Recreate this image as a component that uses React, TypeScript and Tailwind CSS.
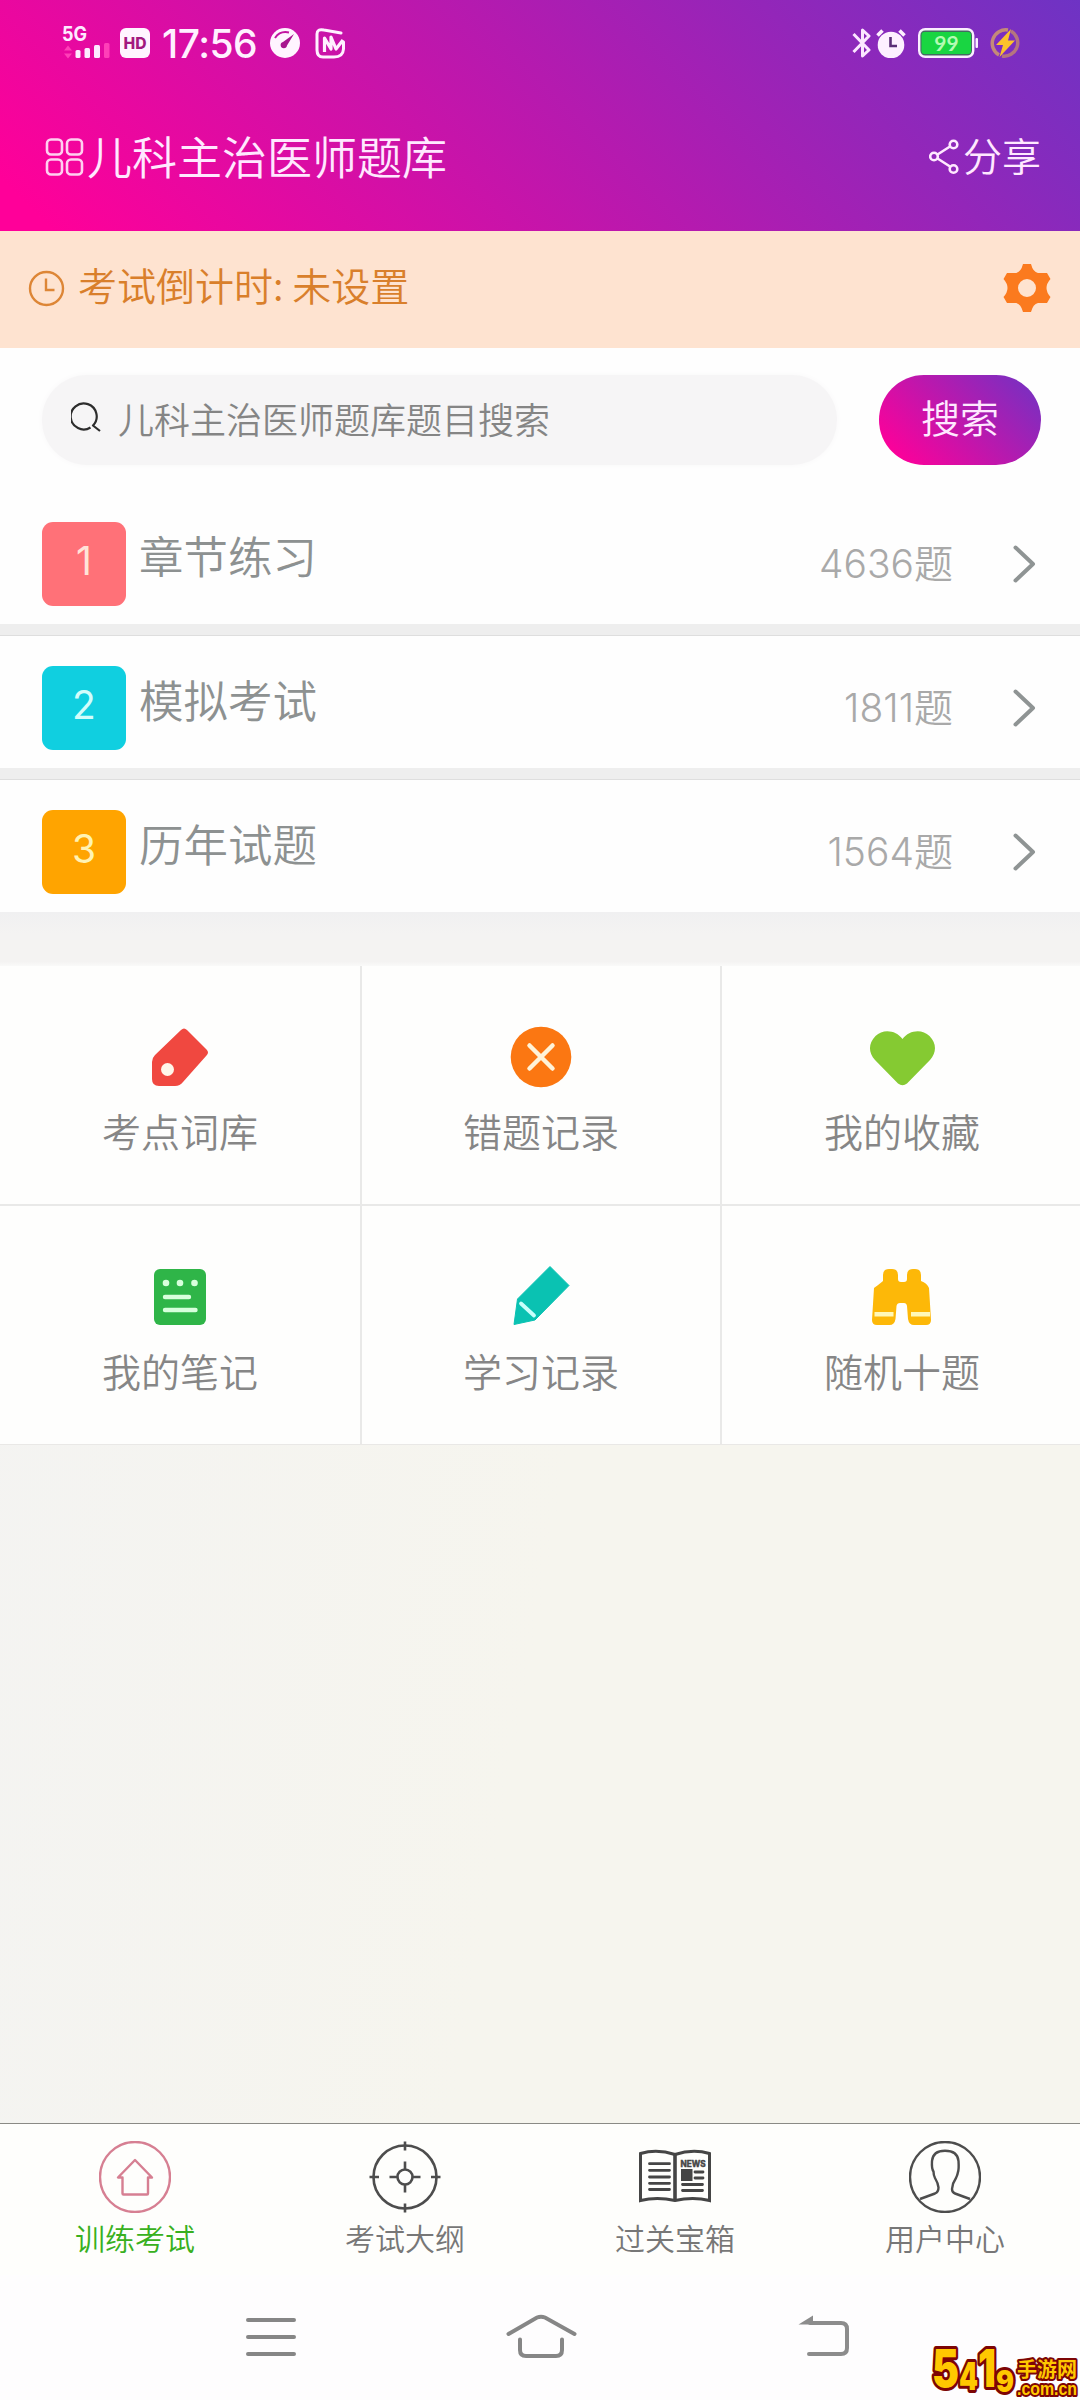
import type { ReactNode } from 'react';

type Section = {
  no: string;
  title: string;
  count: string;
  color: string;
};

type Tool = {
  label: string;
  icon: ReactNode;
};

type Tab = {
  label: string;
  active?: boolean;
  icon: ReactNode;
};

const sections: Section[] = [
  { no: '1', title: '章节练习', count: '4636', color: 'bg-[#ff7178] text-[#ffe3d8]' },
  { no: '2', title: '模拟考试', count: '1811', color: 'bg-[#10cfe0] text-[#d2fdfb]' },
  { no: '3', title: '历年试题', count: '1564', color: 'bg-[#ffa400] text-[#fff3b4]' },
];

const tools: Tool[] = [
  {
    label: '考点词库',
    icon: (
      <>
        <path
          d="M37 9q3-3 6 0L62.500 28.500q3 3 0 6L39 61q-3 4-8 4H15q-7 0-7-7V41q0-4 3-7z"
          fill="#f04840"
        />
        <circle cx="23.500" cy="48.500" r="6.500" fill="#fff6ea" />
      </>
    ),
  },
  {
    label: '错题记录',
    icon: (
      <>
        <circle cx="36" cy="36" r="30.300" fill="#fb7712" />
        <path d="M24.500 24.500l23 23M47.500 24.500l-23 23" stroke="#fff3d8" strokeWidth="4.500" strokeLinecap="round" />
      </>
    ),
  },
  {
    label: '我的收藏',
    icon: (
      <path
        d="M36.500 18C30 9 17 7.500 9.500 15C2 22.500 2.500 32 9 39L32 62.500Q36.500 66 41 62.500L64 39C70.500 32 71 22.500 63.500 15C56 7.500 43 9 36.500 18Z"
        fill="#85ca32"
      />
    ),
  },
  {
    label: '我的笔记',
    icon: (
      <>
        <rect x="10" y="8" width="52" height="56" rx="6" fill="#2fb548" />
        <g fill="#d8ffdc">
          <circle cx="22" cy="22" r="3.300" />
          <circle cx="36" cy="22" r="3.300" />
          <circle cx="50.500" cy="22" r="3.300" />
        </g>
        <path d="M21 36h24M21 49h30.500" stroke="#d8ffdc" strokeWidth="4.400" strokeLinecap="round" />
      </>
    ),
  },
  {
    label: '学习记录',
    icon: (
      <>
        <path d="M9 63.500L12.500 38L45 5.500L64 24.500L30 59Z" fill="#0ac2b2" stroke="#0ac2b2" strokeLinejoin="round" />
        <path d="M16 42.500L29 54.500" stroke="#c8fffb" strokeWidth="3.800" strokeLinecap="round" />
      </>
    ),
  },
  {
    label: '随机十题',
    icon: (
      <>
        <path
          d="M17 14q0-6 6-6h3q6 0 6 6v4q0 3 3 3h3q3 0 3-3v-4q0-6 6-6h2q6 0 6 6v6q6 2 8 7l2 32q0 5-5 5H48q-5 0-6-6l-1-13q-.500-3-3-3h-4q-3 0-3.500 3l-1 13q-1 6-6 6H11q-5 0-5-5l2-32q3-2 9-7z"
          fill="#fdb808"
        />
        <path d="M8.500 53.300h19M45 53.300h19" stroke="#fff8b8" strokeWidth="4.400" />
      </>
    ),
  },
];

const tabs: Tab[] = [
  {
    label: '训练考试',
    active: true,
    icon: (
      <g stroke="#d67f92" strokeWidth="2.400">
        <circle cx="36" cy="36" r="35" />
        <path d="M36 19L19 36.500H23.500V52.500Q23.500 53.500 24.500 53.500H48Q49 53.500 49 52.500V36.500H53Z" strokeLinejoin="round" />
      </g>
    ),
  },
  {
    label: '考试大纲',
    icon: (
      <g stroke="#4d4d4d" strokeWidth="2.600">
        <circle cx="36" cy="36" r="31.500" />
        <circle cx="36" cy="36" r="7.500" />
        <path d="M36 .500v9M36 62.500v9M.500 36h9.500M62 36h9.500M36 20.500v8M36 43.500v8M20.500 36h8M43.500 36h8" />
      </g>
    ),
  },
  {
    label: '过关宝箱',
    icon: (
      <g stroke="#454545">
        <path
          d="M36 13.500Q18 7.500 1.500 12.500V59.500Q18 55.500 36 59.500Q54 55.500 70.500 59.500V12.500Q54 7.500 36 13.500Z"
          strokeWidth="3"
        />
        <path d="M36 13v47" strokeWidth="3.600" />
        <path
          d="M10.500 22.700h20M10.500 29.300h20M10.500 36h20M10.500 42.300h20M10.500 48.500h20M56 31h8M56 37h8M43.500 43.500h20M43.500 49.500h20"
          strokeWidth="2.800"
          strokeLinecap="round"
        />
        <rect x="42" y="28" width="11.500" height="12" fill="#454545" stroke="none" />
        <text
          x="41.500"
          y="25.500"
          fontSize="8.600"
          fontWeight="700"
          textLength="25"
          lengthAdjust="spacingAndGlyphs"
          fill="#454545"
          strokeWidth=".500"
          fontFamily="Inter, sans-serif"
        >
          NEWS
        </text>
      </g>
    ),
  },
  {
    label: '用户中心',
    icon: (
      <g stroke="#4d4d4d" strokeWidth="2.400">
        <circle cx="36" cy="36" r="35" />
        <path
          d="M11 58L26 52.500Q29.500 51 29.500 46.500Q29 42 26 37Q24.500 34 24.500 30.500Q22.500 28 23 20Q24 9.800 36 9.800Q48.500 9.800 49.500 20Q50 28 49 31Q48.500 34 47 37Q43.500 42 43 48Q43 51.500 46 52.500L61 58"
          strokeLinejoin="round"
        />
      </g>
    ),
  },
];

function StatusBar() {
  return (
    <div className="flex h-[86px] items-center justify-between pr-[60px] pl-[62px]">
      <div className="flex items-center">
        <svg className="overflow-visible" width="50" height="36" viewBox="0 0 50 36" fill="#fdeaff">
          <text x="0" y="16" fontSize="20" fontWeight="700" textLength="25" lengthAdjust="spacingAndGlyphs" fontFamily="Inter, sans-serif">
            5G
          </text>
          <path d="M2 25.500l4-5 4 5zM2 28.500l4 5 4-5z" fill="#ff3fb8" />
          <rect x="13.500" y="25" width="5" height="8" rx="1.500" />
          <rect x="22.500" y="23" width="5.500" height="10" rx="1.500" />
          <rect x="32" y="20" width="6" height="13" rx="1.500" />
          <rect x="42" y="18" width="5.500" height="15" rx="1.500" fill="#ff3fb8" />
        </svg>
        <svg className="ml-2" width="30" height="30" viewBox="0 0 30 30">
          <rect width="30" height="30" rx="6" fill="#fff4ff" />
          <text
            x="3.500"
            y="21"
            fontSize="16"
            fontWeight="800"
            textLength="23"
            lengthAdjust="spacingAndGlyphs"
            fill="#a3197f"
            fontFamily="Inter, sans-serif"
          >
            HD
          </text>
        </svg>
        <span className="ml-[12px] w-[96px] font-['Inter'] text-[39px] leading-none font-medium tracking-[-.500px] whitespace-nowrap text-[#fff0ff]">
          17:56
        </span>
        <svg className="ml-[12px]" width="30" height="30" viewBox="0 0 30 30">
          <circle cx="15" cy="15" r="15" fill="#fff4ff" />
          <path d="M5 10Q10 2.500 19 4.500" fill="none" stroke="#c213a0" strokeWidth="2" />
          <path d="M24 6L13 14a3.200 3.200 0 1 0 4 3.500z" fill="#a8168f" />
        </svg>
        <svg className="ml-[15px]" width="31" height="31" viewBox="0 0 31 31" fill="none" stroke="#fff0ff">
          <path
            d="M26 5L9 2Q2 .500 2 6V22Q2 29 8 29H19Q28 29 28.500 21V14"
            strokeWidth="3"
            strokeLinecap="round"
            strokeLinejoin="round"
          />
          <path d="M9.500 24V10L16 21V9L21 21L28 12" strokeWidth="3.200" strokeLinejoin="round" />
        </svg>
      </div>

      <div className="flex items-center">
        <svg width="20" height="30" viewBox="0 0 20 30" fill="none" stroke="#fbe6ff" strokeWidth="3">
          <path d="M1.500 6L17 22L10.500 28V2L17 8L1.500 24" strokeLinejoin="round" />
        </svg>
        <svg className="ml-1" width="30" height="30" viewBox="0 0 30 30">
          <circle cx="15" cy="17" r="13.300" fill="#fdf0ff" />
          <path d="M1.500 7.500L6.500 2.500M28.500 7.500L23.500 2.500" stroke="#fdf0ff" strokeWidth="3.600" />
          <path d="M14.500 9v9h6.500" fill="none" stroke="#5a2f77" strokeWidth="2.600" />
        </svg>
        <svg className="ml-3" width="60" height="30" viewBox="0 0 60 30">
          <rect x="1.200" y="1.200" width="54" height="27.600" rx="6" fill="#446a62" stroke="#fbeeff" strokeWidth="2.400" />
          <rect x="3.500" y="4" width="49.500" height="22" rx="3" fill="#19d542" />
          <rect x="57.500" y="10" width="2.500" height="10" rx="1" fill="#fbeeff" />
          <text
            x="28.500"
            y="22.500"
            fontSize="21"
            fontWeight="700"
            textAnchor="middle"
            fill="#b4fbb3"
            fontFamily="Lato, sans-serif"
          >
            99
          </text>
        </svg>
        <svg className="ml-3" width="30" height="30" viewBox="0 0 30 30">
          <path d="M9 27A13.500 13.500 0 0 1 18 2" fill="none" stroke="#c48a78" strokeWidth="3.500" />
          <path d="M21 3A13.500 13.500 0 0 1 12 28" fill="none" stroke="#b5757f" strokeWidth="3.500" />
          <path d="M21 1L6 17h7L9.500 29L25 12.500h-7z" fill="#fbc22b" />
        </svg>
      </div>
    </div>
  );
}

function Header() {
  return (
    <header className="h-[231px] bg-[linear-gradient(45deg,#ff0099_4%,#6e33c4)]">
      <StatusBar />
      <div className="flex h-[142px] items-center justify-between pr-[39px] pl-[45px] text-[#ffe8ff]">
        <div className="flex items-center text-[45px] leading-none">
          <svg width="39" height="39" viewBox="0 0 39 39" fill="none" stroke="#ffd0f0" strokeWidth="2.600">
            <rect x="2" y="1.500" width="15" height="15" rx="4" />
            <rect x="22" y="1.500" width="15" height="15" rx="4" />
            <rect x="2" y="21.500" width="15" height="15" rx="4" />
            <rect x="22" y="21.500" width="15" height="15" rx="4" />
          </svg>
          <h1 className="ml-[3px] pb-[3px]">儿科主治医师题库</h1>
        </div>
        <div className="flex items-center pb-[1px] text-[39px] leading-none">
          <svg width="30" height="36" viewBox="0 0 30 36" fill="none" stroke="#ffe8ff" strokeWidth="2.600">
            <circle cx="5" cy="17.500" r="3.800" />
            <circle cx="24.500" cy="5.500" r="3.800" />
            <circle cx="24.500" cy="30" r="3.800" />
            <path d="M8.500 15.500L21 7.500M8.500 19.500L21 27.500" />
          </svg>
          <span className="ml-[4px] pb-[5px]">分享</span>
        </div>
      </div>
    </header>
  );
}

function Countdown() {
  return (
    <div className="flex h-[117px] items-center justify-between bg-[#fee3d0] pr-[28px] pb-[3px] pl-[28px]">
      <div className="flex items-center text-[39px] leading-none text-[#d97f2b]">
        <svg width="37" height="37" viewBox="0 0 37 37" fill="none" stroke="#dd8636" strokeWidth="2.400">
          <circle cx="18.500" cy="18.500" r="16.500" />
          <path d="M18 8.500v11.500h8.500" />
        </svg>
        <span className="ml-[13px] pb-[7px] whitespace-pre">考试倒计时: 未设置</span>
      </div>
      <svg width="50" height="50" viewBox="-25 -25 50 50" fill="#fb7a1e">
        <path
          fillRule="evenodd"
          d="M-4-24H4Q6-16 11-15H20L23.500-9Q15.500 0 23.500 9L20 15H11Q6 16 4 24H-4Q-6 16-11 15H-20L-23.500 9Q-15.500 0-23.500-9L-20-15H-11Q-6-16-4-24ZM0-9A9 9 0 1 0 0 9A9 9 0 1 0 0-9Z"
        />
      </svg>
    </div>
  );
}

function SearchBar() {
  return (
    <div className="flex h-[144px] items-start justify-between bg-[#fefefe] pt-[27px] pr-[39px] pl-[42px]">
      <div className="flex h-[90px] w-[795px] items-center rounded-full bg-[#f6f5f6] pl-[29px] shadow-[0_0_6px_#f9f8f9]">
        <svg className="mb-[7px]" width="31" height="31" viewBox="0 0 31 31" fill="none" stroke="#2d2d2d" strokeWidth="2.200">
          <path d="M19.500 26.500A13 13 0 1 1 22 24.500L29 30" strokeLinejoin="round" />
        </svg>
        <span className="ml-[16px] pb-[5px] text-[36px] leading-none text-[#858585]">儿科主治医师题库题目搜索</span>
      </div>
      <button className="h-[90px] w-[162px] rounded-full bg-[linear-gradient(45deg,#ff0099_8%,#6e33c4)] pb-[7px] text-[39px] leading-none text-[#ffe8ff]">
        搜索
      </button>
    </div>
  );
}

function SectionRow({ section }: { section: Section }) {
  return (
    <div className="flex h-[132px] items-center bg-[#fefefe] pt-[12px] pl-[42px] pr-[44px]">
      <div
        className={`flex size-[84px] items-center justify-center rounded-[11px] pb-[8px] font-['Inter'] text-[39px] leading-none font-normal ${section.color}`}
      >
        {section.no}
      </div>
      <div className="ml-[13px] pb-[18px] text-[44.500px] leading-none text-[#8d9191]">{section.title}</div>
      <div className="ml-auto flex items-center pb-[3px] text-[39px] leading-none text-[#a9a9a9]">
        <span className="pt-[2px] font-['Inter'] text-[39px]">{section.count}</span>
        <span className="pb-[3px]">题</span>
      </div>
      <svg className="ml-[60px]" width="23" height="38" viewBox="0 0 23 38" fill="none" stroke="#8f9494" strokeWidth="4">
        <path d="M2.500 2.500L20 19L2.500 35.500" strokeLinecap="round" strokeLinejoin="round" />
      </svg>
    </div>
  );
}

function ToolGrid() {
  return (
    <div className="grid grid-cols-[362px_360px_358px] border-b border-[#e9e8e6] bg-[#fefefd]">
      {tools.map((t, i) => (
        <div
          key={t.label}
          className={`flex flex-col items-center border-[#e9e9e8] pt-[55px] ${
            i % 3 < 2 ? 'border-r-2' : 'pl-[2px]'
          } ${i < 3 ? 'h-[240px] border-b-2' : 'h-[238px]'}`}
        >
          <svg width="72" height="72" viewBox="0 0 72 72" fill="none">
            {t.icon}
          </svg>
          <span className="mt-[18px] text-[39px] leading-none text-[#868686]">{t.label}</span>
        </div>
      ))}
    </div>
  );
}

function TabBar() {
  return (
    <nav className="grid h-[152px] grid-cols-4 border-t border-[#8a8a85] bg-[#fefefc]">
      {tabs.map((t) => (
        <div key={t.label} className="flex flex-col items-center pt-[17px]">
          <svg width="72" height="72" viewBox="0 0 72 72" fill="none">
            {t.icon}
          </svg>
          <span className={`mt-[9px] text-[30px] leading-none ${t.active ? 'text-[#38b020]' : 'text-[#777777]'}`}>
            {t.label}
          </span>
        </div>
      ))}
    </nav>
  );
}

function SystemNav() {
  return (
    <div className="flex h-[125px] items-start bg-[#fefdfe] pt-[39px] pl-[244px]">
      <svg width="54" height="46" viewBox="0 0 54 46" fill="none" stroke="#868686" strokeWidth="4" strokeLinecap="round">
        <path d="M4 6h46M4 23h46M4 40h46" />
      </svg>
      <svg
        className="ml-[207px]"
        width="74"
        height="46"
        viewBox="0 0 74 46"
        fill="none"
        stroke="#868686"
        strokeWidth="4"
        strokeLinecap="round"
      >
        <path d="M3.500 20L32 3.500Q36 2 40 3.500L69.500 20M15 25.500V36q0 6 6 6H51q6 0 6-6V25.500" />
      </svg>
      <svg className="ml-[219px]" width="54" height="46" viewBox="0 0 54 46" fill="none" stroke="#8c8c8c" strokeWidth="4">
        <path d="M12 9H43q6 0 6 6V34q0 6-6 6H11" strokeLinecap="round" />
        <path d="M.500 10.500L15 1.500V10.500Z" fill="#8c8c8c" stroke="none" />
      </svg>
    </div>
  );
}

function SiteMark() {
  return (
    <svg
      className="absolute right-0 bottom-0"
      width="152"
      height="68"
      viewBox="-2 -12 152 68"
      fill="#ffc800"
      stroke="#7d0505"
      strokeWidth="6"
      strokeLinejoin="round"
      paintOrder="stroke"
      fontWeight="900"
      fontFamily="Inter, sans-serif"
    >
      <text x="2" y="43" fontSize="52" textLength="27" lengthAdjust="spacingAndGlyphs">
        5
      </text>
      <text x="29" y="46" fontSize="38" textLength="19" lengthAdjust="spacingAndGlyphs">
        4
      </text>
      <text x="48" y="43" fontSize="52" textLength="18" lengthAdjust="spacingAndGlyphs">
        1
      </text>
      <text x="66" y="48" fontSize="30" textLength="18" lengthAdjust="spacingAndGlyphs">
        9
      </text>
      <g strokeWidth="4" fontWeight="700">
        <text x="87" y="33" fontSize="20" textLength="60" fontFamily="'Noto Sans CJK SC', sans-serif">
          手游网
        </text>
        <text
          x="87"
          y="51"
          fontSize="18"
          textLength="60"
          lengthAdjust="spacingAndGlyphs"
          fontFamily="'Liberation Sans', sans-serif"
        >
          .com.cn
        </text>
      </g>
    </svg>
  );
}

export default function App() {
  return (
    <main className="relative flex h-[2400px] w-[1080px] flex-col overflow-hidden bg-[linear-gradient(100deg,#f3f3f3,#f6f5ee_55%)] font-['Noto_Sans_CJK_SC',sans-serif] font-[350]">
      <Header />
      <Countdown />
      <SearchBar />
      <div className="flex flex-col">
        {sections.map((s, i) => (
          <div key={s.no} className={i < sections.length - 1 ? 'border-b border-[#dedede]' : ''}>
            <SectionRow section={s} />
            {i < sections.length - 1 && <div className="h-[11px] bg-[#eeeeee]" />}
          </div>
        ))}
      </div>
      <div className="h-[54px] shrink-0 bg-[linear-gradient(#f0f0f1,#f4f3f2_40%,#f4f3f2_92%,#fafaf9)]" />
      <ToolGrid />
      <div className="mt-auto">
        <TabBar />
        <SystemNav />
      </div>
      <SiteMark />
    </main>
  );
}
